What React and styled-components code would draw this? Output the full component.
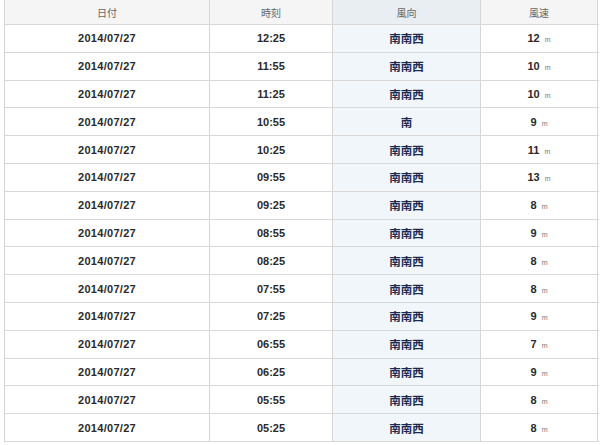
import React from "react";
import styled, { createGlobalStyle } from "styled-components";

const Global = createGlobalStyle`
  html, body { margin: 0; padding: 0; background: #fff; }
  body { font-family: "Liberation Sans", "Noto Sans CJK JP", sans-serif; }
`;

const COLS = "205px 123px 148px 117px";

const Table = styled.div`
  margin-left: 4px;
  width: 594px;
  border-left: 1px solid #d6d6d6;
  display: flex;
  flex-direction: column;
`;

const Row = styled.div`
  display: grid;
  grid-template-columns: ${COLS};
  height: ${(p) => (p.$head ? "25px" : "27.8px")};
  box-sizing: border-box;
  border-bottom: 1px solid #d8d8d8;
  flex: none;
`;

const Cell = styled.div`
  box-sizing: border-box;
  border-right: 1px solid #d6d6d6;
  display: flex;
  align-items: center;
  justify-content: center;
  background: ${(p) => (p.$accent ? "#f1f6fb" : "#ffffff")};
`;

const HeadCell = styled(Cell)`
  background: ${(p) => (p.$accent ? "#e9eef2" : "#f5f5f5")};
  color: #666;
  font-family: "Noto Sans CJK JP", sans-serif;
  font-size: 10px;
  padding-top: 1px;
`;

const Num = styled.span`
  font-family: "Liberation Sans", sans-serif;
  font-weight: bold;
  font-size: 11px;
  color: #2a2a2a;
  letter-spacing: ${(p) => p.$ls || "0"};
`;

const Dir = styled.span`
  font-family: "Noto Sans CJK JP", sans-serif;
  font-weight: bold;
  font-size: 11.5px;
  color: #1c2a52;
`;

const Unit = styled.span`
  font-family: "Liberation Sans", sans-serif;
  font-size: 7px;
  color: #777;
  margin-left: 5px;
  margin-top: 3px;
`;

const Speed = styled.div`
  display: flex;
  align-items: center;
`;

const data = [
  ["12:25", "南南西", 12],
  ["11:55", "南南西", 10],
  ["11:25", "南南西", 10],
  ["10:55", "南", 9],
  ["10:25", "南南西", 11],
  ["09:55", "南南西", 13],
  ["09:25", "南南西", 8],
  ["08:55", "南南西", 9],
  ["08:25", "南南西", 8],
  ["07:55", "南南西", 8],
  ["07:25", "南南西", 9],
  ["06:55", "南南西", 7],
  ["06:25", "南南西", 9],
  ["05:55", "南南西", 8],
  ["05:25", "南南西", 8],
];

export default function App() {
  return (
    <>
      <Global />
      <Table>
        <Row $head>
          <HeadCell>日付</HeadCell>
          <HeadCell>時刻</HeadCell>
          <HeadCell $accent>風向</HeadCell>
          <HeadCell>風速</HeadCell>
        </Row>
        {data.map(([t, d, s]) => (
          <Row key={t}>
            <Cell>
              <Num $ls="0.3px">2014/07/27</Num>
            </Cell>
            <Cell>
              <Num>{t}</Num>
            </Cell>
            <Cell $accent>
              <Dir>{d}</Dir>
            </Cell>
            <Cell>
              <Speed>
                <Num>{s}</Num>
                <Unit>m</Unit>
              </Speed>
            </Cell>
          </Row>
        ))}
      </Table>
    </>
  );
}
